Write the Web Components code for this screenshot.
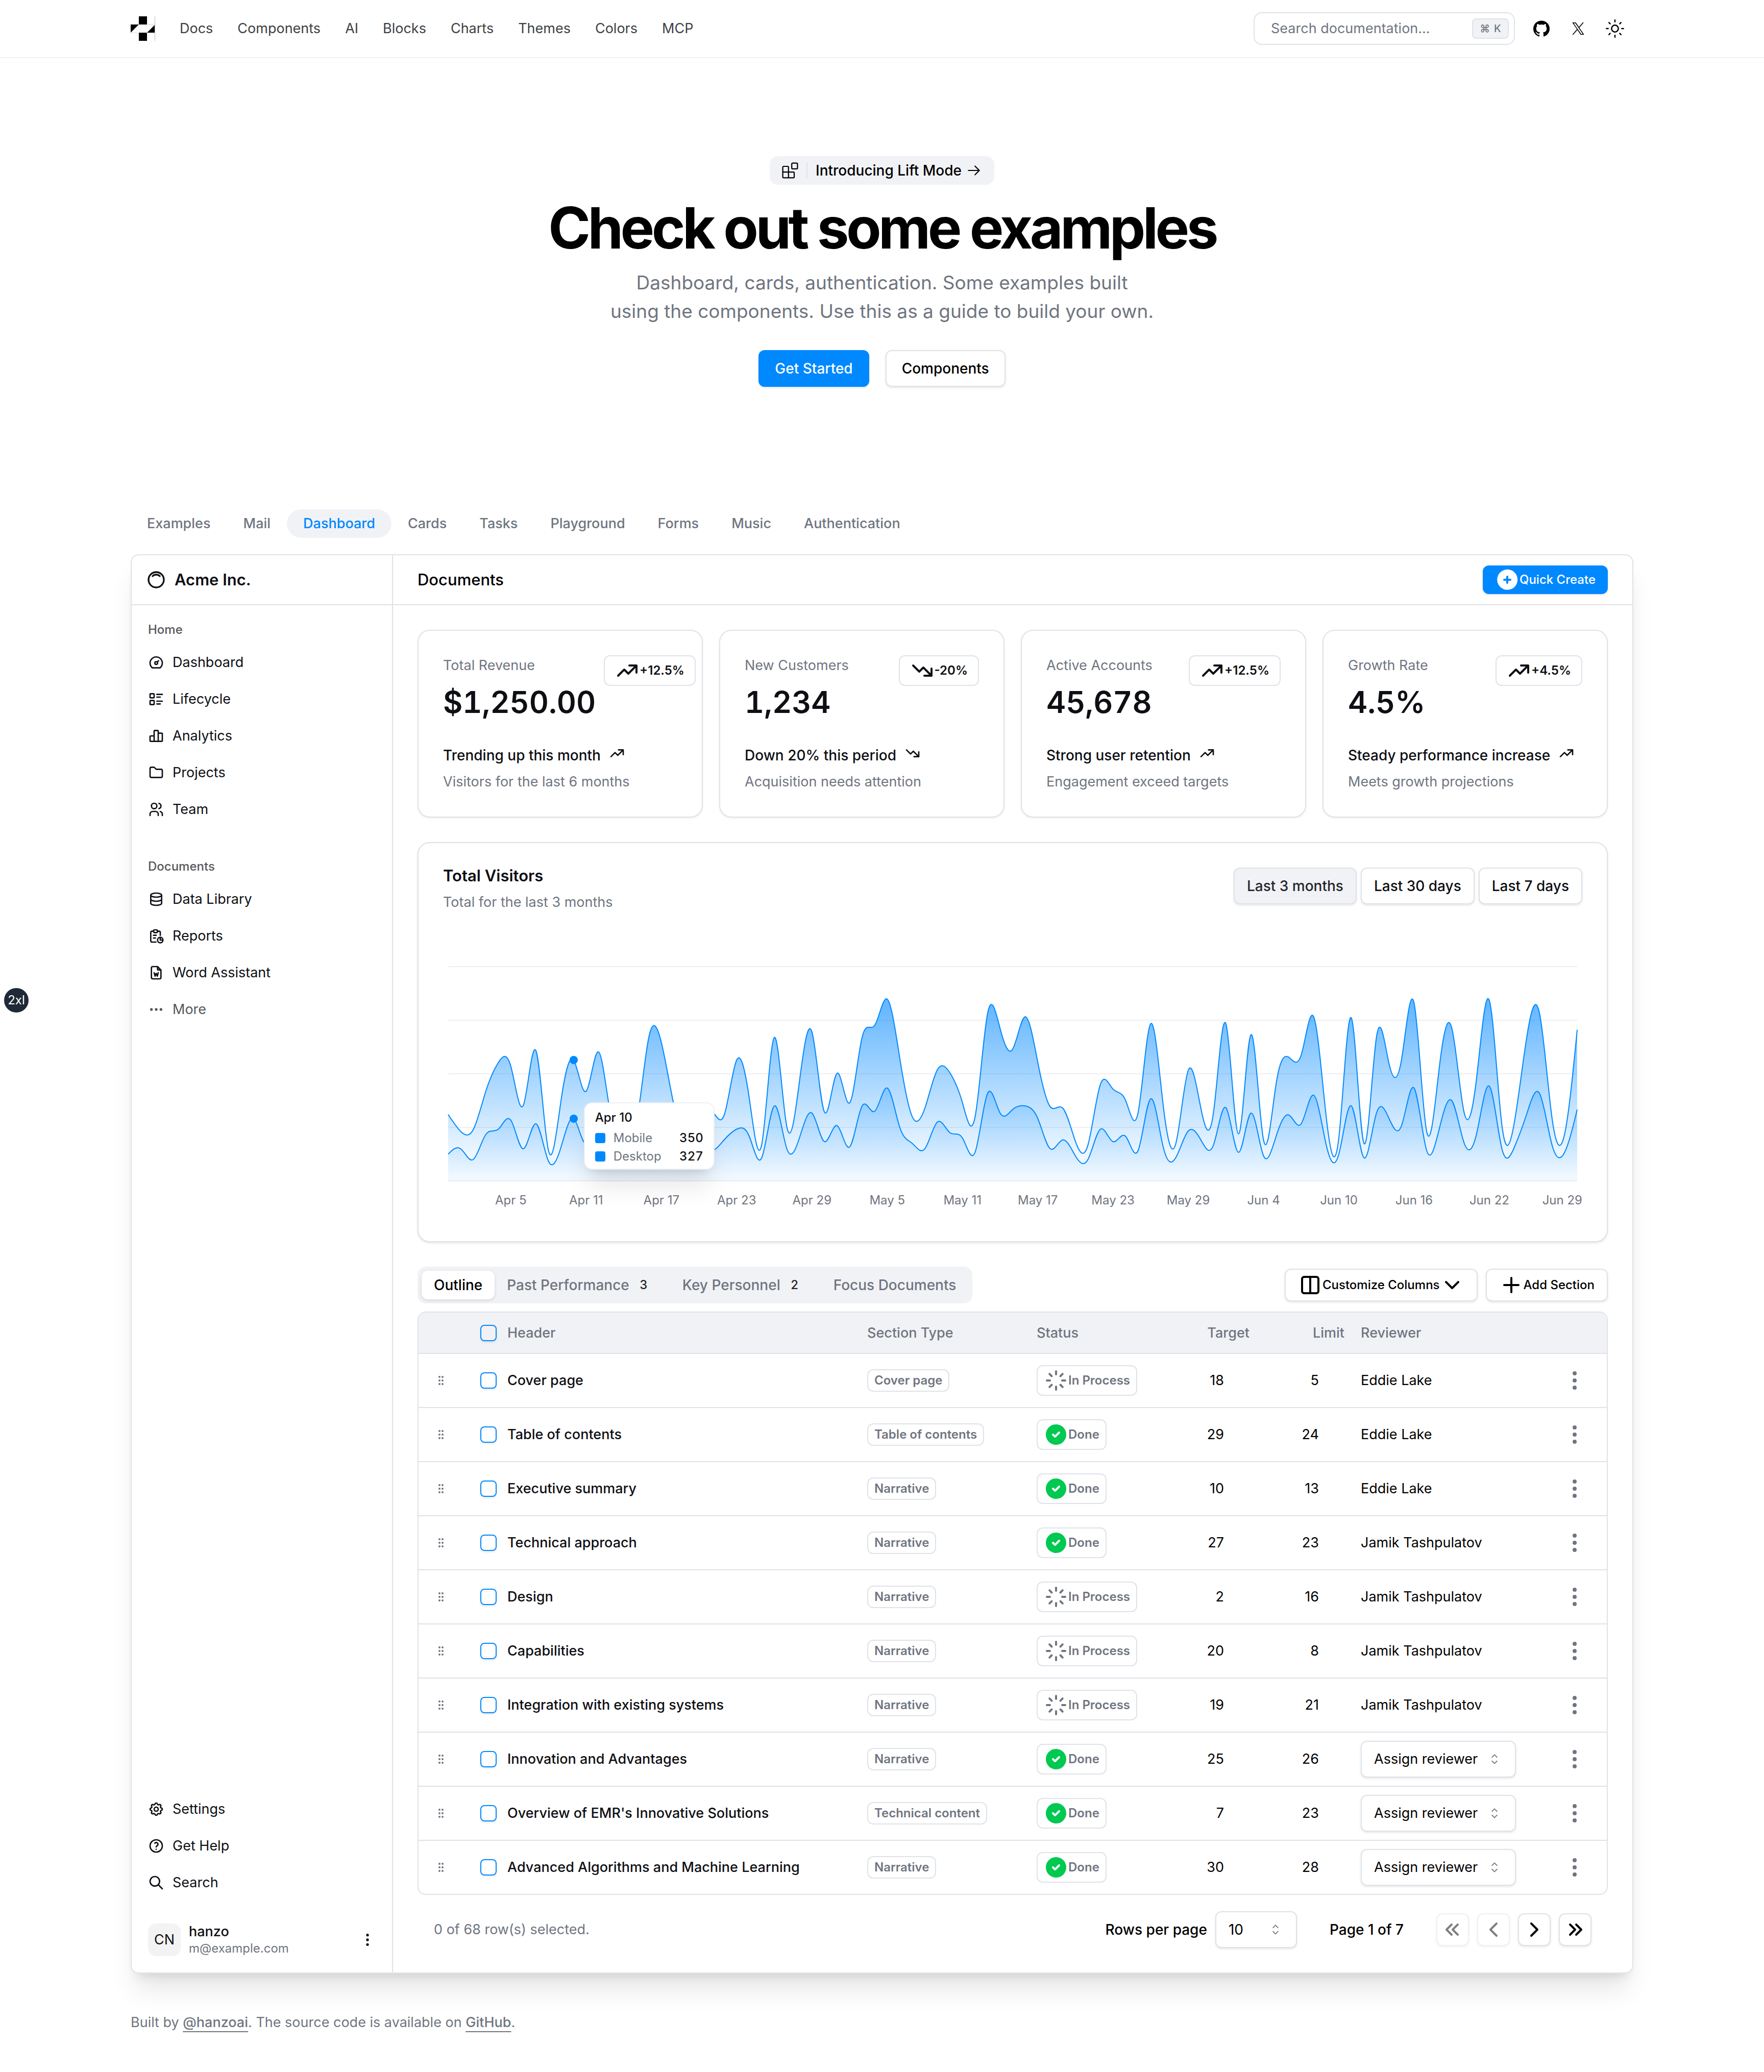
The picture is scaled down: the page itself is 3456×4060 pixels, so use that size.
<!DOCTYPE html>
<html lang="en">
<head>
<meta charset="utf-8">
<meta name="viewport" content="width=device-width, initial-scale=1">
<title>Check out some examples</title>
<style>
:root {
  --primary: #0088ff;
  --fg: #0e0f14;
  --muted: #6f7580;
  --soft: #f1f2f6;
  --border: #dfe2e7;
  --r-sm: 8px;
  --r-md: 12px;
  --r-lg: 16px;
  --r-xl: 24px;
  --shadow: 0 2px 4px rgba(0, 0, 0, .06);
  --shadow-btn: 0 2px 4px rgba(0, 0, 0, .1);
  --t-xs: 24px;
  --t-sm: 27px;
  --t-btn: 28px;
  --t-md: 31px;
}
body {
  margin: 0;
  background: #fff;
  color: #000;
  font-family: Inter, "Liberation Sans", sans-serif;
  font-size: var(--t-sm);
  line-height: 40px;
  position: relative;
}
main {
  display: block;
  max-width: 2944px;
  margin: 0 auto;
}
</style>
</head>
<body>
<site-header></site-header>
<hero-section>
  <span slot="badge">Introducing Lift Mode</span>
  <span slot="title">Check out some examples</span>
  <span slot="text">Dashboard, cards, authentication. Some examples built using the components. Use this as a guide to build your own.</span>
</hero-section>
<main>
  <example-tabs></example-tabs>
  <dash-panel></dash-panel>
  <site-footer></site-footer>
</main>
<screen-indicator>2xl</screen-indicator>

<script>
const BASE = `
  *, *::before, *::after { box-sizing: border-box; }
  :host { display: block; }
  a { color: inherit; text-decoration: none; }
  button, input, select { font: inherit; color: inherit; margin: 0; }
  button { cursor: pointer; background: none; border: 0; padding: 0; }
  ui-icon { flex: none; }
`;
function define(tag, css, html) {
  customElements.define(tag, class extends HTMLElement {
    constructor() {
      super();
      this.attachShadow({ mode: 'open' });
    }
    connectedCallback() {
      const body = typeof html === 'function' ? html(this) : html;
      this.shadowRoot.innerHTML = `<style>${BASE}${css}</style>${body}`;
    }
  });
}

/* ---------- icons ---------- */
const line = (d, weight = 2, box = '0 0 24 24') => `<svg viewBox="${box}" fill="none" stroke="currentColor" stroke-width="${weight}" stroke-linecap="round" stroke-linejoin="round" aria-hidden="true"><path d="${d}"/></svg>`;
const solid = (d, box = '0 0 24 24') => `<svg viewBox="${box}" fill="currentColor" aria-hidden="true"><path fill-rule="evenodd" d="${d}"/></svg>`;
const dot = (x, y) => `M${x - 1} ${y}a1 1 0 1 0 2 0a1 1 0 1 0 -2 0`;
const ICONS = {
  logo: `<svg viewBox="0 0 48 48" aria-hidden="true"><path d="M16 0h16v16h-16zM16 32h16v16h-16zM0 16h16l-16 16zM48 16v16h-16z" fill="#000"/><path d="M32 15.500h16M0 32.500h16" stroke="#ddd" stroke-width="1"/><path d="M47.500 0v48" stroke="#bbb" stroke-width="1"/></svg>`,
  github: solid('M409.132 114.573c-19.608-33.596-46.205-60.194-79.798-79.8-33.598-19.607-70.277-29.408-110.063-29.408-39.781 0-76.472 9.804-110.063 29.408-33.596 19.605-60.192 46.204-79.8 79.8C9.803 148.168 0 184.854 0 224.63c0 47.78 13.94 90.745 41.827 128.906 27.884 38.164 63.906 64.572 108.063 79.227 5.14.954 8.945.283 11.419-1.996 2.475-2.282 3.711-5.14 3.711-8.562 0-.571-.049-5.708-.144-15.417a2549.81 2549.81 0 01-.144-25.406l-6.567 1.136c-4.187.767-9.469 1.092-15.846 1-6.374-.089-12.991-.757-19.842-1.999-6.854-1.231-13.229-4.086-19.13-8.559-5.898-4.473-10.085-10.328-12.56-17.556l-2.855-6.57c-1.903-4.374-4.899-9.233-8.992-14.559-4.093-5.331-8.232-8.945-12.419-10.848l-1.999-1.431c-1.332-.951-2.568-2.098-3.711-3.429-1.142-1.331-1.997-2.663-2.568-3.997-.572-1.335-.098-2.43 1.427-3.289 1.525-.859 4.281-1.276 8.28-1.276l5.708.853c3.807.763 8.516 3.042 14.133 6.851 5.614 3.806 10.229 8.754 13.846 14.842 4.38 7.806 9.657 13.754 15.846 17.847 6.184 4.093 12.419 6.136 18.699 6.136 6.28 0 11.704-.476 16.274-1.423 4.565-.952 8.848-2.383 12.847-4.285 1.713-12.758 6.377-22.559 13.988-29.41-10.848-1.14-20.601-2.857-29.264-5.14-8.658-2.286-17.605-5.996-26.835-11.14-9.235-5.137-16.896-11.516-22.985-19.126-6.09-7.614-11.088-17.61-14.987-29.979-3.901-12.374-5.852-26.648-5.852-42.826 0-23.035 7.52-42.637 22.557-58.817-7.044-17.318-6.379-36.732 1.997-58.24 5.52-1.715 13.706-.428 24.554 3.853 10.85 4.283 18.794 7.952 23.84 10.994 5.046 3.041 9.089 5.618 12.135 7.708 17.705-4.947 35.976-7.421 54.818-7.421s37.117 2.474 54.823 7.421l10.849-6.849c7.419-4.57 16.18-8.758 26.262-12.565 10.088-3.805 17.802-4.853 23.134-3.138 8.562 21.509 9.325 40.922 2.279 58.24 15.036 16.18 22.559 35.787 22.559 58.817 0 16.178-1.958 30.497-5.853 42.966-3.9 12.471-8.941 22.457-15.125 29.979-6.191 7.521-13.901 13.85-23.131 18.986-9.232 5.14-18.182 8.85-26.84 11.136-8.662 2.286-18.415 4.004-29.263 5.146 9.894 8.562 14.842 22.077 14.842 40.539v60.237c0 3.422 1.19 6.279 3.572 8.562 2.379 2.279 6.136 2.95 11.276 1.995 44.163-14.653 80.185-41.062 108.068-79.226 27.88-38.161 41.825-81.126 41.825-128.906-.01-39.771-9.818-76.454-29.414-110.049z', '0 0 438.549 438.549'),
  x: solid('M714.163 519.284L1160.89 0H1055.03L667.137 450.887L357.328 0H0L468.492 681.821L0 1226.37H105.866L515.491 750.218L842.672 1226.37H1200L714.137 519.284H714.163ZM569.165 687.828L521.697 619.934L144.011 79.694H306.615L611.412 515.685L658.88 583.579L1055.08 1150.3H892.476L569.165 687.854V687.828Z', '0 0 1200 1227'),
  sun: line('M8 12a4 4 0 1 0 8 0a4 4 0 1 0 -8 0M12 2v2M12 20v2M4.93 4.93l1.41 1.41M17.66 17.66l1.41 1.41M2 12h2M20 12h2M6.34 17.66l-1.41 1.41M19.07 4.93l-1.41 1.41', 1.5),
  blocks: line('M15 3h5a1 1 0 0 1 1 1v5a1 1 0 0 1-1 1h-5a1 1 0 0 1-1-1v-5a1 1 0 0 1 1-1zM10 21V8a1 1 0 0 0-1-1H4a1 1 0 0 0-1 1v12a1 1 0 0 0 1 1h12a1 1 0 0 0 1-1v-5a1 1 0 0 0-1-1H3', 1.4, '2 2 20 20'),
  arrow: solid('M8.146 3.146C8.342 2.951 8.658 2.951 8.854 3.146L12.854 7.146C13.049 7.342 13.049 7.658 12.854 7.854L8.854 11.854C8.658 12.049 8.342 12.049 8.146 11.854C7.951 11.658 7.951 11.342 8.146 11.146L11.293 8H2.5C2.224 8 2 7.776 2 7.5C2 7.224 2.224 7 2.5 7H11.293L8.146 3.854C7.951 3.658 7.951 3.342 8.146 3.146Z', '0 0 15 15'),
  sort: solid('M4.932 5.432C4.756 5.608 4.756 5.892 4.932 6.068C5.108 6.244 5.392 6.244 5.568 6.068L7.5 4.136L9.432 6.068C9.608 6.244 9.892 6.244 10.068 6.068C10.244 5.892 10.244 5.608 10.068 5.432L7.818 3.182C7.734 3.097 7.619 3.05 7.5 3.05C7.381 3.05 7.266 3.097 7.182 3.182L4.932 5.432ZM10.068 9.568C10.244 9.392 10.244 9.108 10.068 8.932C9.892 8.756 9.608 8.756 9.432 8.932L7.5 10.864L5.568 8.932C5.392 8.756 5.108 8.756 4.932 8.932C4.756 9.108 4.756 9.392 4.932 9.568L7.182 11.818C7.358 11.994 7.642 11.994 7.818 11.818L10.068 9.568Z', '0 0 15 15'),
  acme: line('M5.636 5.636a9 9 0 1 0 12.728 12.728a9 9 0 0 0 -12.728 -12.728zM16.243 7.757a6 6 0 0 0 -8.486 0'),
  dashboard: line('M10 13a2 2 0 1 0 4 0a2 2 0 1 0 -4 0M13.45 11.55l2.05 -2.05M6.4 20a9 9 0 1 1 11.2 0z'),
  list: line('M13 5h8M13 9h5M13 15h8M13 19h5M3 5a1 1 0 0 1 1 -1h4a1 1 0 0 1 1 1v4a1 1 0 0 1 -1 1h-4a1 1 0 0 1 -1 -1zM3 15a1 1 0 0 1 1 -1h4a1 1 0 0 1 1 1v4a1 1 0 0 1 -1 1h-4a1 1 0 0 1 -1 -1z'),
  chart: line('M3 13a1 1 0 0 1 1 -1h4a1 1 0 0 1 1 1v6a1 1 0 0 1 -1 1h-4a1 1 0 0 1 -1 -1zM15 9a1 1 0 0 1 1 -1h4a1 1 0 0 1 1 1v10a1 1 0 0 1 -1 1h-4a1 1 0 0 1 -1 -1zM9 5a1 1 0 0 1 1 -1h4a1 1 0 0 1 1 1v14a1 1 0 0 1 -1 1h-4a1 1 0 0 1 -1 -1zM4 20h14'),
  folder: line('M5 4h4l3 3h7a2 2 0 0 1 2 2v8a2 2 0 0 1 -2 2h-14a2 2 0 0 1 -2 -2v-11a2 2 0 0 1 2 -2'),
  users: line('M5 7a4 4 0 1 0 8 0a4 4 0 1 0 -8 0M3 21v-2a4 4 0 0 1 4 -4h4a4 4 0 0 1 4 4v2M16 3.13a4 4 0 0 1 0 7.75M21 21v-2a4 4 0 0 0 -3 -3.85'),
  database: line('M4 6a8 3 0 1 0 16 0a8 3 0 1 0 -16 0M4 6v6a8 3 0 0 0 16 0v-6M4 12v6a8 3 0 0 0 16 0v-6'),
  report: line('M8 5h-2a2 2 0 0 0 -2 2v12a2 2 0 0 0 2 2h5.697M18 14v4h4M18 11v-4a2 2 0 0 0 -2 -2h-2M8 5a2 2 0 0 1 2 -2h2a2 2 0 0 1 2 2a2 2 0 0 1 -2 2h-2a2 2 0 0 1 -2 -2zM14 18a4 4 0 1 0 8 0a4 4 0 1 0 -8 0M8 11h4M8 15h3'),
  word: line('M14 3v4a1 1 0 0 0 1 1h4M17 21h-10a2 2 0 0 1 -2 -2v-14a2 2 0 0 1 2 -2h7l5 5v11a2 2 0 0 1 -2 2zM9 12l1.333 5l1.667 -4l1.667 4l1.333 -5'),
  dots: line(dot(5, 12) + dot(12, 12) + dot(19, 12)),
  more: line(dot(12, 5) + dot(12, 12) + dot(12, 19)),
  grip: line([5, 12, 19].map((y) => dot(9, y) + dot(15, y)).join('')),
  settings: line('M10.325 4.317c.426 -1.756 2.924 -1.756 3.35 0a1.724 1.724 0 0 0 2.573 1.066c1.543 -.94 3.31 .826 2.37 2.37a1.724 1.724 0 0 0 1.065 2.572c1.756 .426 1.756 2.924 0 3.35a1.724 1.724 0 0 0 -1.066 2.573c.94 1.543 -.826 3.31 -2.37 2.37a1.724 1.724 0 0 0 -2.572 1.065c-.426 1.756 -2.924 1.756 -3.35 0a1.724 1.724 0 0 0 -2.573 -1.066c-1.543 .94 -3.31 -.826 -2.37 -2.37a1.724 1.724 0 0 0 -1.065 -2.572c-1.756 -.426 -1.756 -2.924 0 -3.35a1.724 1.724 0 0 0 1.066 -2.573c-.94 -1.543 .826 -3.31 2.37 -2.37c1 .608 2.296 .07 2.572 -1.065zM9 12a3 3 0 1 0 6 0a3 3 0 0 0 -6 0'),
  help: line('M3 12a9 9 0 1 0 18 0a9 9 0 1 0 -18 0M12 17v.01M12 13.5a1.5 1.5 0 0 1 1 -1.5a2.6 2.6 0 1 0 -3 -4'),
  search: line('M3 10a7 7 0 1 0 14 0a7 7 0 1 0 -14 0M21 21l-6 -6'),
  plusfill: solid('M4.929 4.929a10 10 0 1 1 14.141 14.141a10 10 0 0 1 -14.14 -14.14zm8.071 4.071a1 1 0 1 0 -2 0v2h-2a1 1 0 1 0 0 2h2v2a1 1 0 1 0 2 0v-2h2a1 1 0 1 0 0 -2h-2v-2z'),
  check: solid('M17 3.34a10 10 0 1 1 -14.995 8.984l-.005 -.324l.005 -.324a10 10 0 0 1 14.995 -8.336zm-1.293 5.953a1 1 0 0 0 -1.32 -.083l-.094 .083l-3.293 3.292l-1.293 -1.292l-.094 -.083a1 1 0 0 0 -1.403 1.403l.083 .094l2 2l.094 .083a1 1 0 0 0 1.226 0l.094 -.083l4 -4l.083 -.094a1 1 0 0 0 -.083 -1.32z'),
  loader: line('M12 6v-3M16.25 7.75l2.15 -2.15M18 12h3M16.25 16.25l2.15 2.15M12 18v3M7.75 16.25l-2.15 2.15M6 12h-3M7.75 7.75l-2.15 -2.15'),
  up: line('M3 17l6 -6l4 4l8 -8M14 7h7v7'),
  down: line('M3 7l6 6l4 -4l8 8M21 10v7h-7'),
  columns: line('M4 6a2 2 0 0 1 2 -2h12a2 2 0 0 1 2 2v12a2 2 0 0 1 -2 2h-12a2 2 0 0 1 -2 -2zM12 4v16'),
  chevdown: line('M6 9l6 6l6 -6'),
  plus: line('M12 5v14M5 12h14'),
  first: line('M11 7l-5 5l5 5M17 7l-5 5l5 5'),
  prev: line('M15 6l-6 6l6 6'),
  next: line('M9 6l6 6l-6 6'),
  last: line('M7 7l5 5l-5 5M13 7l5 5l-5 5'),
};
define('ui-icon', `
  :host { display: inline-flex; width: var(--icon, 32px); height: var(--icon, 32px); }
  svg { display: block; width: 100%; height: 100%; overflow: visible; }
`, (el) => ICONS[el.getAttribute('name')] || '');

/* ---------- site header ---------- */
define('site-header', `
  :host { border-bottom: 2px solid #f2f2f2; background: #fff; }
  .bar { max-width: 2944px; height: 112px; margin: 0 auto; display: flex; align-items: center; gap: 48px; }
  .logo { --icon: 48px; display: flex; }
  nav { display: flex; gap: 48px; color: #3d3f43; }
  .end { margin-left: auto; display: flex; align-items: center; gap: 16px; }
  .search { width: 512px; height: 64px; display: flex; align-items: center; gap: 16px; padding: 0 10px 0 32px; border: 2px solid var(--border); border-radius: var(--r-lg); }
  input { flex: 1; min-width: 0; border: 0; outline: 0; padding: 0; background: none; }
  input::placeholder { color: var(--muted); opacity: 1; }
  kbd { display: flex; align-items: center; justify-content: center; gap: 8px; width: 72px; height: 40px; border: 2px solid var(--border); border-radius: var(--r-sm); background: var(--soft); color: var(--muted); font: 500 20px/24px Inter, "DejaVu Sans", sans-serif; }
  .icons { display: flex; }
  .icons > * { width: 72px; height: 64px; display: flex; align-items: center; justify-content: center; }
  .x { --icon: 24px; }
  .theme { --icon: 40px; }
`, `
  <div class="bar">
    <a class="logo" href="#" aria-label="Home"><ui-icon name="logo"></ui-icon></a>
    <nav aria-label="Main">
      <a href="#">Docs</a><a href="#">Components</a><a href="#">AI</a><a href="#">Blocks</a><a href="#">Charts</a><a href="#">Themes</a><a href="#">Colors</a><a href="#">MCP</a>
    </nav>
    <div class="end">
      <div class="search">
        <input type="text" placeholder="Search documentation..." aria-label="Search documentation">
        <kbd><span>⌘</span><span>K</span></kbd>
      </div>
      <div class="icons">
        <a href="#" aria-label="GitHub"><ui-icon name="github"></ui-icon></a>
        <a class="x" href="#" aria-label="X"><ui-icon name="x"></ui-icon></a>
        <button class="theme" type="button" aria-label="Toggle theme"><ui-icon name="sun"></ui-icon></button>
      </div>
    </div>
  </div>
`);

/* ---------- hero ---------- */
define('hero-section', `
  :host { display: flex; flex-direction: column; align-items: center; padding: 192px 48px 240px; text-align: center; font-size: var(--t-btn); }
  .badge { display: flex; align-items: center; height: 56px; padding: 0 24px; border-radius: var(--r-lg); background: var(--soft); font-weight: 500; }
  .badge i { width: 2px; height: 32px; margin: 0 16px; background: var(--border); }
  .badge ui-icon:last-child { margin-left: 8px; }
  h1 { margin: 18px 0 0; font-size: 112px; line-height: 132px; font-weight: 700; letter-spacing: -0.05em; }
  p { margin: 14px 0 0; max-width: 1120px; font-size: 37px; line-height: 56px; color: var(--muted); text-wrap: balance; }
  .actions { display: flex; gap: 32px; margin-top: 48px; }
  .actions a { display: flex; align-items: center; height: 72px; padding: 0 30px; border: 2px solid var(--border); border-radius: var(--r-md); font-weight: 500; box-shadow: var(--shadow-btn); }
  .actions a.primary { background: var(--primary); border-color: var(--primary); color: #fff; }
`, `
  <a class="badge" href="#"><ui-icon name="blocks"></ui-icon><i></i><slot name="badge"></slot><ui-icon name="arrow"></ui-icon></a>
  <h1><slot name="title"></slot></h1>
  <p><slot name="text"></slot></p>
  <div class="actions"><a class="primary" href="#">Get Started</a><a href="#">Components</a></div>
`);

define('example-tabs', `
  nav { display: flex; margin-bottom: 32px; color: var(--muted); font-weight: 500; }
  a { height: 56px; padding: 0 32px; line-height: 56px; border-radius: 28px; }
  .on { background: var(--soft); color: var(--primary); }
`, `
  <nav aria-label="Examples">
    ${['Examples', 'Mail', 'Dashboard', 'Cards', 'Tasks', 'Playground', 'Forms', 'Music', 'Authentication']
      .map((t) => `<a href="#"${t === 'Dashboard' ? ' class="on" aria-current="page"' : ''}>${t}</a>`).join('')}
  </nav>
`);

/* ---------- sidebar ---------- */
const navLink = (icon, text, cls = '') => `<a class="${cls}" href="#"><ui-icon name="${icon}"></ui-icon>${text}</a>`;
define('side-nav', `
  :host { display: flex; flex-direction: column; color: var(--fg); }
  .brand { display: flex; align-items: center; gap: 16px; height: 98px; padding: 0 28px; border-bottom: 2px solid var(--border); font-size: var(--t-md); font-weight: 600; --icon: 40px; }
  section { display: flex; flex-direction: column; gap: 8px; padding: 16px; }
  section + section { margin-top: 16px; }
  h2 { margin: 0 0 -8px; height: 64px; padding: 0 16px; font-size: var(--t-xs); line-height: 64px; font-weight: 500; color: #56575b; }
  section a { display: flex; align-items: center; gap: 16px; height: 64px; padding: 0 16px; }
  .dim { color: #56575b; }
  section.bottom { margin-top: auto; }
  .user { display: flex; align-items: center; gap: 16px; height: 96px; margin: 16px; padding: 0 16px; text-align: left; }
  .avatar { width: 64px; height: 64px; border-radius: var(--r-lg); background: #f3f3f3; text-align: center; line-height: 64px; }
  .who { flex: 1; display: flex; flex-direction: column; line-height: 33px; }
  .who b { font-weight: 500; }
  .who small { font-size: var(--t-xs); color: var(--muted); }
`, `
  <a class="brand" href="#"><ui-icon name="acme"></ui-icon>Acme Inc.</a>
  <section>
    <h2>Home</h2>
    ${navLink('dashboard', 'Dashboard')}${navLink('list', 'Lifecycle')}${navLink('chart', 'Analytics')}${navLink('folder', 'Projects')}${navLink('users', 'Team')}
  </section>
  <section>
    <h2>Documents</h2>
    ${navLink('database', 'Data Library')}${navLink('report', 'Reports')}${navLink('word', 'Word Assistant')}${navLink('dots', 'More', 'dim')}
  </section>
  <section class="bottom">
    ${navLink('settings', 'Settings')}${navLink('help', 'Get Help')}${navLink('search', 'Search')}
  </section>
  <button class="user" type="button">
    <span class="avatar">CN</span>
    <span class="who"><b>hanzo</b><small>m@example.com</small></span>
    <ui-icon name="more"></ui-icon>
  </button>
`);

/* ---------- stat card ---------- */
define('stat-card', `
  :host { flex: 1; min-width: 0; padding: 48px; border: 2px solid var(--border); border-radius: var(--r-xl); background: #fff; color: var(--fg); box-shadow: var(--shadow); box-sizing: border-box; }
  .top { display: grid; grid-template-columns: 1fr auto; gap: 16px; align-items: start; }
  .label { color: var(--muted); margin-bottom: 12px; }
  .value { font-size: 59px; line-height: 80px; font-weight: 600; font-variant-numeric: tabular-nums; }
  .badge { display: flex; align-items: center; padding: 4px 20px; border: 2px solid var(--border); border-radius: var(--r-md); font-size: var(--t-xs); font-weight: 600; --icon: 48px; }
  .trend { display: flex; gap: 16px; margin-top: 44px; font-size: var(--t-btn); font-weight: 500; }
  .note { margin-top: 12px; color: var(--muted); }
`, (el) => `
  <div class="top">
    <div><div class="label"><slot name="label"></slot></div><div class="value"><slot name="value"></slot></div></div>
    <div class="badge"><ui-icon name="${el.getAttribute('trend')}"></ui-icon><slot name="change"></slot></div>
  </div>
  <div class="trend"><slot name="summary"></slot><ui-icon name="${el.getAttribute('trend')}"></ui-icon></div>
  <div class="note"><slot name="note"></slot></div>
`);

/* ---------- visitors chart ---------- */
const DESKTOP = [222,97,167,242,373,301,245,409,59,261,327,292,342,137,120,138,446,364,243,89,137,224,138,387,215,75,383,122,315,454,165,293,247,385,481,498,388,149,227,293,335,197,197,448,473,338,499,315,235,177,82,81,252,294,201,213,420,233,78,340,178,178,470,103,439,88,294,323,385,438,155,92,492,81,426,307,371,475,107,341,408,169,317,480,132,141,434,448,149,103,446];
const MOBILE = [150,180,120,260,290,340,180,320,110,190,350,210,380,220,170,190,360,410,180,150,200,170,230,290,250,130,420,180,240,380,220,310,190,420,390,520,300,210,180,330,270,240,160,490,380,400,420,350,180,230,140,120,290,220,250,170,460,190,130,280,230,200,410,160,380,140,250,370,320,480,200,150,420,130,380,350,310,520,170,290,450,210,270,530,180,190,380,490,200,160,400];
const PLOT_W = 2212, PLOT_H = 420, MAX = 1200;
/* natural cubic spline: bezier control points for one axis */
function controls(v) {
  const n = v.length - 1, a = new Array(n), b = new Array(n), r = new Array(n);
  a[0] = 0; b[0] = 2; r[0] = v[0] + 2 * v[1];
  for (let i = 1; i < n - 1; i++) { a[i] = 1; b[i] = 4; r[i] = 4 * v[i] + 2 * v[i + 1]; }
  a[n - 1] = 2; b[n - 1] = 7; r[n - 1] = 8 * v[n - 1] + v[n];
  for (let i = 1; i < n; i++) { const m = a[i] / b[i - 1]; b[i] -= m; r[i] -= m * r[i - 1]; }
  a[n - 1] = r[n - 1] / b[n - 1];
  for (let i = n - 2; i >= 0; i--) a[i] = (r[i] - a[i + 1]) / b[i];
  b[n - 1] = (v[n] + a[n - 1]) / 2;
  for (let i = 0; i < n - 1; i++) b[i] = 2 * v[i + 1] - a[i + 1];
  return [a, b];
}
function spline(ys, back = false) {
  const xs = ys.map((_, i) => i * PLOT_W / (ys.length - 1));
  const vs = ys.slice();
  if (back) { xs.reverse(); vs.reverse(); }
  const [xa, xb] = controls(xs), [ya, yb] = controls(vs);
  const f = (n) => n.toFixed(2);
  let d = `${f(xs[0])} ${f(vs[0])}`;
  for (let i = 0; i < xs.length - 1; i++) d += `C${f(xa[i])} ${f(ya[i])} ${f(xb[i])} ${f(yb[i])} ${f(xs[i + 1])} ${f(vs[i + 1])}`;
  return d;
}
const yOf = (v) => PLOT_H - v / MAX * PLOT_H;
const lowY = MOBILE.map(yOf), highY = MOBILE.map((m, i) => yOf(m + DESKTOP[i]));
const TICKS = ['Apr 5', 'Apr 11', 'Apr 17', 'Apr 23', 'Apr 29', 'May 5', 'May 11', 'May 17', 'May 23', 'May 29', 'Jun 4', 'Jun 10', 'Jun 16', 'Jun 22'];
define('visitors-chart', `
  :host { padding: 48px; border: 2px solid var(--border); border-radius: var(--r-xl); background: #fff; color: var(--fg); box-shadow: var(--shadow-btn); box-sizing: border-box; }
  header { display: flex; justify-content: space-between; align-items: flex-start; }
  h2 { margin: 0 0 16px; font-size: var(--t-md); line-height: 32px; font-weight: 600; }
  p { margin: 0; color: var(--muted); }
  .range { display: flex; gap: 8px; font-size: var(--t-btn); }
  .range button { height: 72px; padding: 0 24px; border: 2px solid var(--border); border-radius: var(--r-md); font-weight: 500; box-shadow: var(--shadow-btn); background: #fff; }
  .range button[aria-pressed=true] { background: var(--soft); color: #25262b; }
  .chart { margin-top: 96px; height: 500px; padding: 10px; }
  .plot { position: relative; height: 420px; }
  svg { display: block; width: 100%; height: 100%; overflow: visible; }
  .axis { display: grid; grid-template-columns: repeat(90, minmax(0, 1fr)); margin-top: 22px; font-size: var(--t-xs); line-height: 32px; color: var(--muted); }
  .axis span { grid-row: 1; justify-self: center; white-space: nowrap; }
  .axis .end { grid-column: 85 / -1; justify-self: end; margin-right: -10px; }
  .dot { position: absolute; width: 16px; height: 16px; margin: -8px; border-radius: 50%; background: var(--primary); left: calc(100% / 9); }
  .tip { position: absolute; left: calc(100% / 9 + 20px); top: 266px; width: 256px; padding: 16px 20px 12px; border: 2px solid #eef0f3; border-radius: var(--r-lg); background: #fff; font-size: var(--t-xs); line-height: 24px; box-shadow: 0 40px 50px -10px rgba(0,0,0,.1), 0 16px 20px -12px rgba(0,0,0,.1); }
  .tip b { display: block; margin-bottom: 16px; font-weight: 500; }
  .tip div { display: flex; align-items: center; gap: 16px; color: var(--muted); }
  .tip div + div { margin-top: 12px; }
  .tip i { width: 20px; height: 20px; border-radius: 4px; background: var(--primary); }
  .tip em { margin-left: auto; font-style: normal; font-weight: 500; color: var(--fg); font-variant-numeric: tabular-nums; }
`, `
  <header>
    <div><h2>Total Visitors</h2><p>Total for the last 3 months</p></div>
    <div class="range">
      <button type="button" aria-pressed="true">Last 3 months</button>
      <button type="button" aria-pressed="false">Last 30 days</button>
      <button type="button" aria-pressed="false">Last 7 days</button>
    </div>
  </header>
  <div class="chart">
    <div class="plot">
      <svg viewBox="0 0 ${PLOT_W} ${PLOT_H}" preserveAspectRatio="none" role="img" aria-label="Visitors by day, mobile and desktop">
        <defs>
          <linearGradient id="d" x1="0" y1="0" x2="0" y2="1"><stop offset="5%" stop-color="#0088ff" stop-opacity="1"/><stop offset="95%" stop-color="#0088ff" stop-opacity=".1"/></linearGradient>
          <linearGradient id="m" x1="0" y1="0" x2="0" y2="1"><stop offset="5%" stop-color="#0088ff" stop-opacity=".8"/><stop offset="95%" stop-color="#0088ff" stop-opacity=".1"/></linearGradient>
        </defs>
        <path d="${[0, 1, 2, 3, 4].map((i) => `M0 ${i * 105}H${PLOT_W}`).join('')}" stroke="#eeeff1" stroke-width="2" vector-effect="non-scaling-stroke"/>
        <path d="M${spline(lowY)}L${PLOT_W} ${PLOT_H}L0 ${PLOT_H}Z" fill="url(#m)" fill-opacity=".6"/>
        <path d="M${spline(lowY)}" fill="none" stroke="#0088ff" stroke-width="2" vector-effect="non-scaling-stroke"/>
        <path d="M${spline(highY)}L${spline(lowY, true)}Z" fill="url(#d)" fill-opacity=".6"/>
        <path d="M${spline(highY)}" fill="none" stroke="#0088ff" stroke-width="2" vector-effect="non-scaling-stroke"/>
      </svg>
      <span class="dot" style="top:${highY[10]}px"></span>
      <span class="dot" style="top:${lowY[10]}px"></span>
      <div class="tip"><b>Apr 10</b><div><i></i><span>Mobile</span><em>350</em></div><div><i></i><span>Desktop</span><em>327</em></div></div>
    </div>
    <div class="axis">${TICKS.map((t, i) => `<span style="grid-column:${i * 6 + 3} / span 6">${t}</span>`).join('')}<span class="end">Jun 29</span></div>
  </div>
`);

/* ---------- select ---------- */
define('ui-select', `
  :host { display: inline-grid; width: var(--w, 304px); }
  select, ui-icon { grid-area: 1 / 1; }
  select { appearance: none; width: 100%; height: 72px; padding: 0 24px; border: 2px solid var(--border); border-radius: var(--r-md); background: #fff; box-shadow: var(--shadow-btn); cursor: pointer; }
  ui-icon { justify-self: end; align-self: center; margin-right: 26px; opacity: .5; pointer-events: none; z-index: 1; }
`, (el) => `<select aria-label="${el.getAttribute('label')}"><option>${el.getAttribute('value')}</option></select><ui-icon name="sort"></ui-icon>`);

/* ---------- documents table ---------- */
const ROWS = [
  ['Cover page', 'Cover page', 'In Process', 18, 5, 'Eddie Lake'],
  ['Table of contents', 'Table of contents', 'Done', 29, 24, 'Eddie Lake'],
  ['Executive summary', 'Narrative', 'Done', 10, 13, 'Eddie Lake'],
  ['Technical approach', 'Narrative', 'Done', 27, 23, 'Jamik Tashpulatov'],
  ['Design', 'Narrative', 'In Process', 2, 16, 'Jamik Tashpulatov'],
  ['Capabilities', 'Narrative', 'In Process', 20, 8, 'Jamik Tashpulatov'],
  ['Integration with existing systems', 'Narrative', 'In Process', 19, 21, 'Jamik Tashpulatov'],
  ['Innovation and Advantages', 'Narrative', 'Done', 25, 26, ''],
  ["Overview of EMR's Innovative Solutions", 'Technical content', 'Done', 7, 23, ''],
  ['Advanced Algorithms and Machine Learning', 'Narrative', 'Done', 30, 28, ''],
];
define('documents-table', `
  .tools { display: flex; align-items: center; margin-bottom: 16px; gap: 16px; }
  .tabs { display: flex; height: 72px; padding: 8px; border-radius: var(--r-lg); background: var(--soft); margin-right: auto; font-size: var(--t-btn); }
  .tabs button { display: flex; align-items: center; height: 56px; padding: 0 24px; border-radius: var(--r-md); color: var(--muted); font-weight: 500; }
  .tabs button[aria-selected=true] { background: #fff; color: #000; box-shadow: 0 2px 6px rgba(0,0,0,.12); }
  .tabs .n { width: 40px; margin: 0 8px; text-align: center; font-size: var(--t-xs); color: #25262b; }
  .tool { display: flex; align-items: center; height: 64px; padding: 0 24px; border: 2px solid var(--border); border-radius: var(--r-md); font-size: var(--t-xs); font-weight: 500; box-shadow: var(--shadow-btn); --icon: 48px; background: #fff; }
  .frame { border: 2px solid var(--border); border-radius: var(--r-lg); overflow: hidden; }
  table { width: 100%; table-layout: fixed; border-collapse: separate; border-spacing: 0; text-align: left; }
  th, td { padding: 0 16px; border-bottom: 2px solid var(--border); white-space: nowrap; }
  th { height: 81px; background: var(--soft); color: var(--muted); font-weight: 500; }
  td { height: 106px; }
  tbody tr:last-child td { height: 104px; border-bottom: 0; }
  .check { padding-right: 0; }
  .num { text-align: right; }
  td.num { padding-right: 66px; }
  td.name { color: var(--fg); font-weight: 500; }
  .grip { --icon: 24px; display: flex; justify-content: center; width: 56px; color: var(--muted); }
  input { display: block; appearance: none; width: 32px; height: 32px; border: 2px solid var(--primary); border-radius: var(--r-sm); box-shadow: var(--shadow-btn); }
  .tag { display: inline-flex; align-items: center; height: 44px; padding: 0 12px; border: 2px solid var(--border); border-radius: var(--r-md); color: var(--muted); font-size: var(--t-xs); font-weight: 600; vertical-align: middle; }
  .status { height: 60px; --icon: 48px; }
  .status ui-icon.done { color: #00c951; }
  .dots { --icon: 48px; display: flex; justify-content: center; width: 64px; color: var(--muted); }
  ui-select { vertical-align: middle; }
`, `
  <div class="tools">
    <div class="tabs" role="tablist">
      <button type="button" role="tab" aria-selected="true">Outline</button>
      <button type="button" role="tab" aria-selected="false">Past Performance<span class="n">3</span></button>
      <button type="button" role="tab" aria-selected="false">Key Personnel<span class="n">2</span></button>
      <button type="button" role="tab" aria-selected="false">Focus Documents</button>
    </div>
    <button class="tool" type="button"><ui-icon name="columns"></ui-icon>Customize Columns<ui-icon name="chevdown"></ui-icon></button>
    <button class="tool" type="button"><ui-icon name="plus"></ui-icon>Add Section</button>
  </div>
  <div class="frame">
    <table>
      <colgroup>${[105, 53, 705, 332, 265, 184, 186, 387, 111].map((w) => `<col style="width:${w}px">`).join('')}</colgroup>
      <thead><tr><th></th><th class="check"><input type="checkbox" aria-label="Select all"></th><th>Header</th><th>Section Type</th><th>Status</th><th class="num">Target</th><th class="num">Limit</th><th>Reviewer</th><th></th></tr></thead>
      <tbody>${ROWS.map(([name, type, status, target, limit, who]) => `
        <tr>
          <td><button class="grip" type="button" aria-label="Drag to reorder"><ui-icon name="grip"></ui-icon></button></td>
          <td class="check"><input type="checkbox" aria-label="Select row"></td>
          <td class="name">${name}</td>
          <td><span class="tag">${type}</span></td>
          <td><span class="tag status">${status === 'Done' ? '<ui-icon class="done" name="check"></ui-icon>' : '<ui-icon name="loader"></ui-icon>'}${status}</span></td>
          <td class="num">${target}</td>
          <td class="num">${limit}</td>
          <td>${who || '<ui-select label="Reviewer" value="Assign reviewer"></ui-select>'}</td>
          <td><button class="dots" type="button" aria-label="Open menu"><ui-icon name="more"></ui-icon></button></td>
        </tr>`).join('')}
      </tbody>
    </table>
  </div>
`);

define('table-pager', `
  :host { display: flex; align-items: center; gap: 64px; height: 72px; padding: 0 32px; font-size: var(--t-btn); font-weight: 500; }
  .count { margin-right: auto; color: var(--muted); font-size: var(--t-sm); font-weight: 400; }
  .size { display: flex; align-items: center; gap: 16px; }
  ui-select { --w: 160px; font-weight: 400; }
  .pages { display: flex; gap: 16px; }
  .pages button { display: flex; align-items: center; justify-content: center; width: 64px; height: 64px; border: 2px solid var(--border); border-radius: var(--r-md); box-shadow: var(--shadow-btn); --icon: 48px; background: #fff; color: #000; }
  .pages button:disabled { opacity: .5; }
`, `
  <span class="count">0 of 68 row(s) selected.</span>
  <div class="size"><span>Rows per page</span><ui-select label="Rows per page" value="10"></ui-select></div>
  <span>Page 1 of 7</span>
  <div class="pages">
    <button type="button" disabled aria-label="First page"><ui-icon name="first"></ui-icon></button>
    <button type="button" disabled aria-label="Previous page"><ui-icon name="prev"></ui-icon></button>
    <button type="button" aria-label="Next page"><ui-icon name="next"></ui-icon></button>
    <button type="button" aria-label="Last page"><ui-icon name="last"></ui-icon></button>
  </div>
`);

/* ---------- panel ---------- */
define('dash-panel', `
  :host { display: grid; grid-template-columns: 512px minmax(0, 1fr); border: 2px solid var(--border); border-radius: var(--r-lg); background: #fff; box-shadow: 0 40px 50px -10px rgba(0,0,0,.1), 0 16px 20px -12px rgba(0,0,0,.1); }
  side-nav { border-right: 2px solid var(--border); }
  .head { display: flex; align-items: center; justify-content: space-between; height: 98px; padding: 0 48px; border-bottom: 2px solid var(--border); }
  h1 { margin: 0; font-size: var(--t-md); font-weight: 500; }
  .create { display: flex; align-items: center; height: 56px; padding: 0 24px; border-radius: var(--r-md); background: var(--primary); color: #fff; font-size: var(--t-xs); font-weight: 500; box-shadow: var(--shadow-btn); --icon: 48px; }
  .body { display: flex; flex-direction: column; gap: 48px; padding: 48px; }
  .cards { display: flex; gap: 32px; }
  .docs { display: flex; flex-direction: column; gap: 32px; }
`, `
  <side-nav></side-nav>
  <div>
    <div class="head"><h1>Documents</h1><button class="create" type="button"><ui-icon name="plusfill"></ui-icon>Quick Create</button></div>
    <div class="body">
      <div class="cards">
        ${[['up', 'Total Revenue', '$1,250.00', '+12.5%', 'Trending up this month', 'Visitors for the last 6 months'],
           ['down', 'New Customers', '1,234', '-20%', 'Down 20% this period', 'Acquisition needs attention'],
           ['up', 'Active Accounts', '45,678', '+12.5%', 'Strong user retention', 'Engagement exceed targets'],
           ['up', 'Growth Rate', '4.5%', '+4.5%', 'Steady performance increase', 'Meets growth projections']]
          .map(([t, a, b, c, d, e]) => `<stat-card trend="${t}"><span slot="label">${a}</span><span slot="value">${b}</span><span slot="change">${c}</span><span slot="summary">${d}</span><span slot="note">${e}</span></stat-card>`).join('')}
      </div>
      <visitors-chart></visitors-chart>
      <div class="docs"><documents-table></documents-table><table-pager></table-pager></div>
    </div>
  </div>
`);

define('site-footer', `
  :host { padding: 76px 0; color: var(--muted); }
  a { font-weight: 500; text-decoration: underline; text-decoration-thickness: 2px; text-underline-offset: 8px; }
`, `Built by <a href="#">@hanzoai</a>. The source code is available on <a href="#">GitHub</a>.`);

define('screen-indicator', `
  :host { position: absolute; left: 8px; top: 1936px; display: flex; align-items: center; justify-content: center; width: 48px; height: 48px; border-radius: 50%; background: #1f2937; color: #fff; font-size: var(--t-xs); line-height: 32px; }
`, `<slot></slot>`);
</script>
</body>
</html>
